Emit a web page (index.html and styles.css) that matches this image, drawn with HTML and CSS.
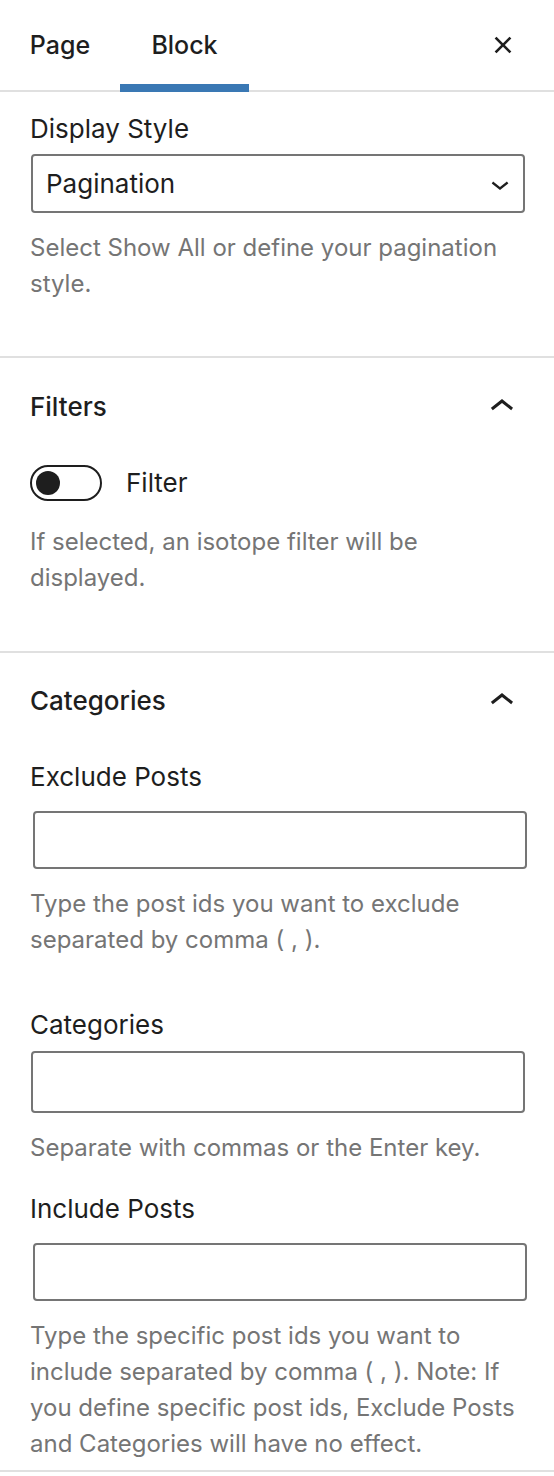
FILE: index.html
```html
<!DOCTYPE html>
<html lang="en">
<head>
<meta charset="utf-8">
<title>Block settings</title>
<link rel="stylesheet" href="styles.css">
</head>
<body>
<div class="sidebar">
  <div class="tabs">
    <div class="tab tab-page">Page</div>
    <div class="tab tab-block active">Block</div>
    <div class="spacer"></div>
    <button class="close" aria-label="Close">
      <svg viewBox="0 0 24 24" width="48" height="48"><path d="M12 13.06l3.712 3.713 1.061-1.06L13.061 12l3.712-3.712-1.06-1.06L12 10.938 8.288 7.227l-1.061 1.06L10.939 12l-3.712 3.712 1.06 1.061L12 13.061z"/></svg>
    </button>
  </div>

  <section class="panel panel-plain">
    <div class="label">Display Style</div>
    <div class="select">
      <span>Pagination</span>
      <svg viewBox="0 0 24 24" width="36" height="36"><path d="M17.5 11.6L12 16l-5.5-4.4.9-1.2L12 14l4.6-3.6 1 1.2z"/></svg>
    </div>
    <p class="help help-first">Select Show All or define your pagination style.</p>
  </section>

  <section class="panel panel-filters">
    <div class="panel-head">
      <span>Filters</span>
      <svg viewBox="0 0 24 24" width="48" height="48"><path d="M6.5 12.4L12 8l5.5 4.4-.9 1.2L12 10l-4.6 3.6-1-1.2z"/></svg>
    </div>
    <div class="toggle-row">
      <span class="toggle"><span class="knob"></span></span>
      <span class="toggle-label">Filter</span>
    </div>
    <p class="help help-toggle">If selected, an isotope filter will be displayed.</p>
  </section>

  <section class="panel panel-last">
    <div class="panel-head">
      <span>Categories</span>
      <svg viewBox="0 0 24 24" width="48" height="48"><path d="M6.5 12.4L12 8l5.5 4.4-.9 1.2L12 10l-4.6 3.6-1-1.2z"/></svg>
    </div>
    <div class="field field-exclude">
      <div class="label">Exclude Posts</div>
      <div class="input shifted"></div>
      <p class="help">Type the post ids you want to exclude separated by comma ( , ).</p>
    </div>
    <div class="field field-cats">
      <div class="label">Categories</div>
      <div class="input"></div>
      <p class="help">Separate with commas or the Enter key.</p>
    </div>
    <div class="field field-include">
      <div class="label">Include Posts</div>
      <div class="input shifted"></div>
      <p class="help">Type the specific post ids you want to include separated by comma ( , ). Note: If you define specific post ids, Exclude Posts and Categories will have no effect.</p>
    </div>
  </section>
</div>
</body>
</html>
```

FILE: styles.css
```css
html, body {
  margin: 0;
  padding: 0;
  background: #fff;
}
body {
  font-family: Inter, "Noto Sans", "Liberation Sans", sans-serif;
  color: #1e1e1e;
  font-size: 26px;
  line-height: 36px;
}
.sidebar {
  width: 554px;
}
.tabs {
  display: flex;
  align-items: stretch;
  height: 90px;
  border-bottom: 2px solid #e0e0e0;
}
.tab {
  display: flex;
  align-items: center;
  justify-content: center;
  font-weight: 500;
  font-size: 25px;
  box-sizing: border-box;
  height: 92px;
  margin-bottom: -2px;
  border-bottom: 8px solid transparent;
  padding-top: 6px;
}
.tab-page {
  width: 120px;
}
.tab-block {
  width: 129px;
}
.tab.active {
  border-bottom-color: #3a78b4;
}
.spacer {
  flex: 1;
}
.close {
  border: 0;
  background: none;
  padding: 0;
  margin: 21px 27px 0 0;
  width: 48px;
  height: 48px;
  display: flex;
  align-items: center;
  justify-content: center;
}
.close svg {
  fill: #1e1e1e;
  width: 42px;
  height: 42px;
}
.panel {
  border-bottom: 2px solid #e0e0e0;
  padding: 0 30px;
}
.panel-plain {
  padding-top: 19px;
  padding-bottom: 54px;
}
.label {
  margin-bottom: 7px;
}
.select {
  height: 59px;
  box-sizing: border-box;
  border: 2px solid #757575;
  border-radius: 4px;
  display: flex;
  align-items: center;
  justify-content: space-between;
  padding: 0 5px 0 13px;
  margin: 0 -1px 0 1px;
}
.select svg {
  fill: #1e1e1e;
}
.help {
  margin: 17px 0 0 0;
  color: #757575;
  font-size: 24px;
  line-height: 36px;
}
.panel-head {
  height: 96px;
  display: flex;
  align-items: center;
  justify-content: space-between;
  font-weight: 500;
  margin-right: -2px;
}
.panel-head svg {
  fill: #1e1e1e;
}
.panel-filters {
  padding-bottom: 55px;
}
.panel-filters .panel-head {
  height: 98px;
}
.toggle-row {
  display: flex;
  align-items: center;
  margin-top: 9px;
}
.toggle {
  width: 72px;
  height: 36px;
  box-sizing: border-box;
  border: 2px solid #1e1e1e;
  border-radius: 18px;
  display: flex;
  align-items: center;
  padding-left: 4px;
  margin-left: 0;
}
.knob {
  width: 24px;
  height: 24px;
  border-radius: 50%;
  background: #1e1e1e;
}
.toggle-label {
  margin-left: 24px;
}
.help-toggle {
  margin-top: 23px;
}
.field-exclude {
  margin-top: 10px;
}
.input {
  height: 58px;
  box-sizing: border-box;
  border: 2px solid #757575;
  border-radius: 4px;
  margin: 8px -1px 0 1px;
}
.input.shifted {
  margin-left: 3px;
  margin-right: -3px;
  margin-top: 16px;
}
.field-cats {
  margin-top: 49px;
}
.field-cats .input {
  height: 62px;
}
.field-include {
  margin-top: 25px;
}
.panel-last {
  padding-bottom: 8px;
}
```
